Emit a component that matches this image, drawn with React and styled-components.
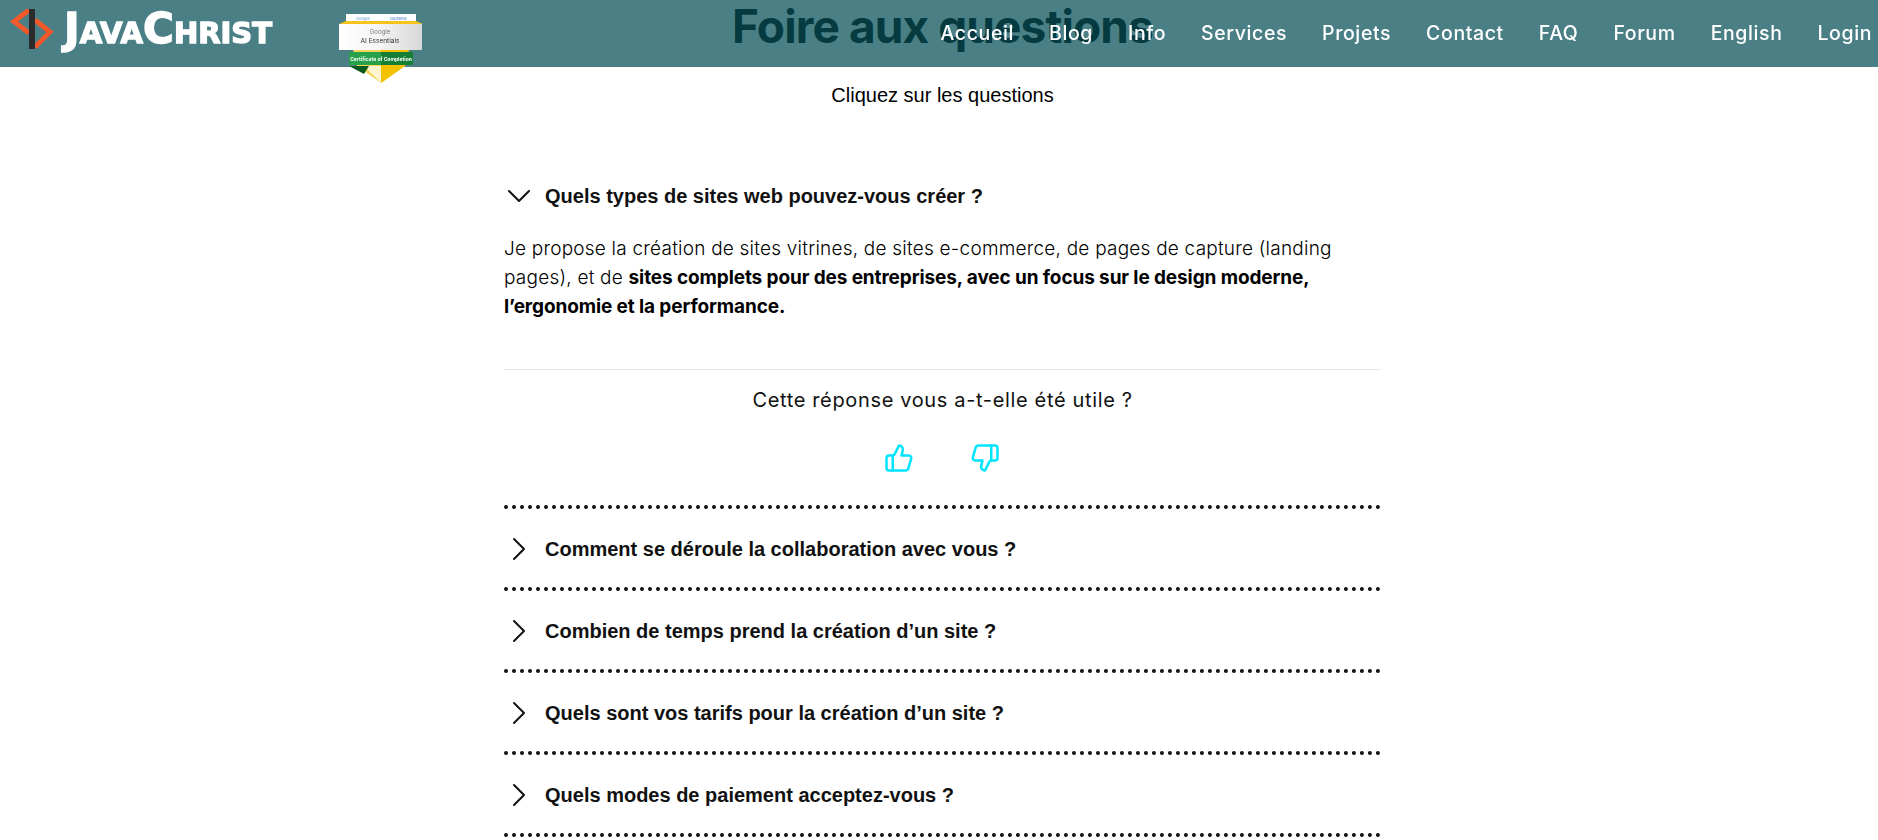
import React from 'react';
import styled, { createGlobalStyle } from 'styled-components';
import { ThumbsUp, ThumbsDown, ChevronDown, ChevronRight } from 'lucide-react';

const GlobalStyle = createGlobalStyle`
    html, body {
        margin: 0;
        padding: 0;
        background: #fff;
    }
`;

const Header = styled.header`
    position: fixed;
    top: 0;
    left: 0;
    right: 0;
    height: 67px;
    display: flex;
    align-items: center;
    justify-content: space-between;
    padding: 0 6px 0 10px;
    box-sizing: border-box;
    background-color: rgba(5, 79, 88, 0.73);
    z-index: 10;
`;

const Brand = styled.div`
    display: flex;
    align-items: center;
    align-self: flex-start;
    height: 57px;
`;

const LogoMark = styled.svg`
    display: block;
    flex-shrink: 0;
`;

const LogoText = styled.span`
    margin-left: 8px;
    font-family: "DejaVu Sans", sans-serif;
    font-weight: 700;
    font-size: 29px;
    line-height: 1;
    color: #fff;
    white-space: nowrap;
    -webkit-text-stroke: 1.4px #fff;
`;

const LogoCap = styled.span`
    font-size: 42px;
`;

const BadgeSlot = styled.div`
    position: relative;
    width: 84px;
    height: 100%;
    margin-left: 67px;
`;

const BadgeImage = styled.div`
    position: absolute;
    top: 14px;
    left: 0;
    filter: blur(0.4px);
`;

const Nav = styled.nav`
    display: flex;
    align-items: center;
    gap: 35px;
    margin-bottom: 2px;
`;

const NavLink = styled.a`
    font-family: Inter, sans-serif;
    font-weight: 500;
    font-size: 19.5px;
    letter-spacing: 0.6px;
    color: #fff;
`;

const Main = styled.main`
    width: 877px;
    margin-left: 504px;
    text-align: center;
`;

const Title = styled.h1`
    margin: 0;
    height: 51px;
    font-family: Inter, sans-serif;
    font-weight: 700;
    font-size: 46px;
    letter-spacing: -0.9px;
    line-height: 52px;
    color: #000;
    white-space: nowrap;
`;

const Subtitle = styled.p`
    margin: 0;
    padding: 32px 0 49px;
    font-family: "Liberation Sans", Arial, sans-serif;
    font-size: 20px;
    line-height: 24px;
    color: #000;
`;

const Item = styled.section`
    border-bottom: 4px dotted #111;
    text-align: left;
`;

const Question = styled.div`
    display: flex;
    align-items: center;
    box-sizing: border-box;
    height: 78px;
    padding: 2px 0 0 2px;
    font-family: "Liberation Sans", Arial, sans-serif;
    font-weight: 700;
    font-size: 20px;
    color: #111;
`;

const Chevron = styled.span`
    display: flex;
    justify-content: center;
    width: 26px;
    margin-right: 13px;
    color: #111;

    svg {
        flex-shrink: 0;
    }
`;

const Answer = styled.p`
    margin: 0;
    padding-bottom: 48px;
    font-family: Inter, sans-serif;
    font-weight: 300;
    font-size: 19px;
    letter-spacing: 0.22px;
    line-height: 29px;
    color: #000;

    strong {
        font-weight: 700;
        letter-spacing: -0.11px;
    }
`;

const Feedback = styled.div`
    border-top: 1px solid #e8e8e8;
    padding: 17px 0 32px;
    text-align: center;
`;

const FeedbackLabel = styled.p`
    margin: 0;
    font-family: Inter, sans-serif;
    font-weight: 400;
    font-size: 20px;
    letter-spacing: 0.65px;
    line-height: 27px;
    color: #111;
`;

const Thumbs = styled.div`
    display: flex;
    justify-content: center;
    gap: 56px;
    margin-top: 29px;
    padding-right: 2px;
    color: #00e5ff;
`;

const Logo = () => (
    <LogoMark width="46" height="40" viewBox="0 0 46 40">
        <polyline points="19,1 4,12.5 19,24" fill="none" stroke="#f1592a" strokeWidth="5" />
        <polyline points="25,11 40,23 25,38" fill="none" stroke="#f1592a" strokeWidth="5" />
        <rect x="19" y="0" width="6" height="40" fill="#2b2b2b" />
    </LogoMark>
);

const Badge = () => (
    <svg width="84" height="70" viewBox="0 0 84 70" style={{ display: 'block' }}>
        <rect x="7" y="0" width="70" height="7" fill="#fff" />
        <text x="24" y="5.5" fontSize="4" textAnchor="middle" fontFamily="Inter, sans-serif" fill="#6a8fd0">Google</text>
        <text x="59" y="5.5" fontSize="4" textAnchor="middle" fontFamily="Inter, sans-serif" fill="#3e6fc0">coursera</text>
        <polygon points="7,7 77,7 84,10 0,10" fill="#f6c21c" />
        <polygon points="14,35 70,35 66,52 42,69 18,52" fill="#f7d45a" />
        <polygon points="42,35 70,35 66,52 42,69" fill="#f2c200" />
        <polygon points="25,52 42,69 42,52" fill="#fdf3cf" />
        <polygon points="10,52 25,60 30,52" fill="#0b5a1e" />
        <defs>
            <linearGradient id="plate" x1="0" x2="1" y1="0" y2="0">
                <stop offset="0" stopColor="#ffffff" />
                <stop offset="0.5" stopColor="#f4f4f4" />
                <stop offset="1" stopColor="#d8d8d8" />
            </linearGradient>
        </defs>
        <rect x="0" y="10" width="83" height="26" fill="url(#plate)" />
        <text x="41" y="20" fontSize="6" textAnchor="middle" fontFamily="Inter, sans-serif" fill="#777">Google</text>
        <text x="41" y="29" fontSize="6.5" textAnchor="middle" fontFamily="Inter, sans-serif" fill="#333">AI Essentials</text>
        <rect x="10" y="38" width="32" height="13" fill="#27a24a" />
        <rect x="42" y="38" width="32" height="13" fill="#157f35" />
        <text x="42" y="47" fontSize="5" fontWeight="700" textAnchor="middle" fontFamily="Inter, sans-serif" fill="#fff">Certificate of Completion</text>
    </svg>
);

const links = ['Accueil', 'Blog', 'Info', 'Services', 'Projets', 'Contact', 'FAQ', 'Forum', 'English', 'Login'];

const questions = [
    'Comment se déroule la collaboration avec vous ?',
    'Combien de temps prend la création d’un site ?',
    'Quels sont vos tarifs pour la création d’un site ?',
    'Quels modes de paiement acceptez-vous ?'
];

const App = () => (
    <>
        <GlobalStyle />
        <Header>
            <Brand>
                <Logo />
                <LogoText><LogoCap>J</LogoCap>AVA<LogoCap>C</LogoCap>HRIST</LogoText>
                <BadgeSlot>
                    <BadgeImage><Badge /></BadgeImage>
                </BadgeSlot>
            </Brand>
            <Nav>
                { links.map(link => <NavLink key={link}>{ link }</NavLink>) }
            </Nav>
        </Header>
        <Main>
            <Title>Foire aux questions</Title>
            <Subtitle>Cliquez sur les questions</Subtitle>
            <Item>
                <Question>
                    <Chevron><ChevronDown size={40} strokeWidth={1.2} /></Chevron>
                    Quels types de sites web pouvez-vous créer ?
                </Question>
                <Answer>
                    Je propose la création de sites vitrines, de sites e-commerce, de pages de capture (landing<br />
                    pages), et de <strong>sites complets pour des entreprises, avec un focus sur le design moderne,<br />
                    l’ergonomie et la performance.</strong>
                </Answer>
                <Feedback>
                    <FeedbackLabel>Cette réponse vous a-t-elle été utile ?</FeedbackLabel>
                    <Thumbs>
                        <ThumbsUp size={30} strokeWidth={2} />
                        <ThumbsDown size={30} strokeWidth={2} />
                    </Thumbs>
                </Feedback>
            </Item>
            { questions.map(question => (
                <Item key={question}>
                    <Question>
                        <Chevron><ChevronRight size={40} strokeWidth={1.2} /></Chevron>
                        { question }
                    </Question>
                </Item>
            )) }
        </Main>
    </>
);

export default App;
